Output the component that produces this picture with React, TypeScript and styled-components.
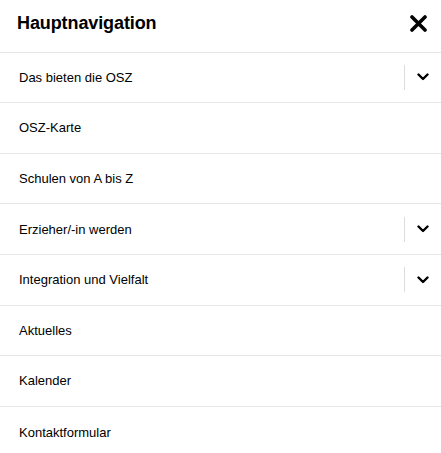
import React from 'react';
import styled, { createGlobalStyle } from 'styled-components';

const GlobalStyle = createGlobalStyle`
  html, body {
    margin: 0;
    padding: 0;
    background: #ffffff;
  }
  body {
    font-family: "Liberation Sans", Arial, sans-serif;
    color: #000000;
  }
`;

const Panel = styled.nav`
  width: 441px;
  background: #ffffff;
`;

const Header = styled.div`
  display: flex;
  align-items: center;
  justify-content: space-between;
  height: 52.6px;
  box-sizing: border-box;
  padding: 0 13px 4px 17px;
  border-bottom: 1px solid #e6e6e6;
`;

const Title = styled.h2`
  margin: 0;
  font-size: 18px;
  font-weight: 700;
  letter-spacing: -0.1px;
`;

const CloseButton = styled.button`
  display: flex;
  align-items: center;
  justify-content: center;
  width: 20px;
  height: 20px;
  padding: 0;
  border: none;
  background: none;
  cursor: pointer;
`;

const List = styled.ul`
  list-style: none;
  margin: 0;
  padding: 0;
`;

const Row = styled.li<{ $last?: boolean }>`
  display: flex;
  align-items: center;
  height: 50.6px;
  box-sizing: border-box;
  border-bottom: ${({ $last }) => ($last ? 'none' : '1px solid #e6e6e6')};
`;

const Label = styled.a`
  flex: 1;
  padding-left: 19px;
  font-size: 13px;
  color: #000000;
  text-decoration: none;
`;

const Toggle = styled.button`
  display: flex;
  align-items: center;
  justify-content: center;
  width: 36px;
  height: 25px;
  padding: 0;
  margin-right: 1px;
  border: none;
  border-left: 1px solid #dcdcdc;
  background: none;
  cursor: pointer;
`;

const items = [
  { label: 'Das bieten die OSZ', sub: true },
  { label: 'OSZ-Karte' },
  { label: 'Schulen von A bis Z' },
  { label: 'Erzieher/-in werden', sub: true },
  { label: 'Integration und Vielfalt', sub: true },
  { label: 'Aktuelles' },
  { label: 'Kalender' },
  { label: 'Kontaktformular' },
];

const Chevron = () => (
  <svg width="12" height="8" viewBox="0 0 12 8">
    <path d="M1.5 1.5 L6 6 L10.5 1.5" fill="none" stroke="#000" strokeWidth="2.4" strokeLinecap="round" strokeLinejoin="round" />
  </svg>
);

const CloseIcon = () => (
  <svg width="17" height="17" viewBox="0 0 17 17">
    <path d="M2 2 L15 15 M15 2 L2 15" stroke="#000" strokeWidth="3.6" strokeLinecap="round" />
  </svg>
);

const App: React.FC = () => (
  <>
    <GlobalStyle />
    <Panel>
      <Header>
        <Title>Hauptnavigation</Title>
        <CloseButton aria-label="Schließen">
          <CloseIcon />
        </CloseButton>
      </Header>
      <List>
        {items.map((item, i) => (
          <Row key={item.label} $last={i === items.length - 1}>
            <Label href="#">{item.label}</Label>
            {item.sub && (
              <Toggle aria-label="Untermenü öffnen">
                <Chevron />
              </Toggle>
            )}
          </Row>
        ))}
      </List>
    </Panel>
  </>
);

export default App;
